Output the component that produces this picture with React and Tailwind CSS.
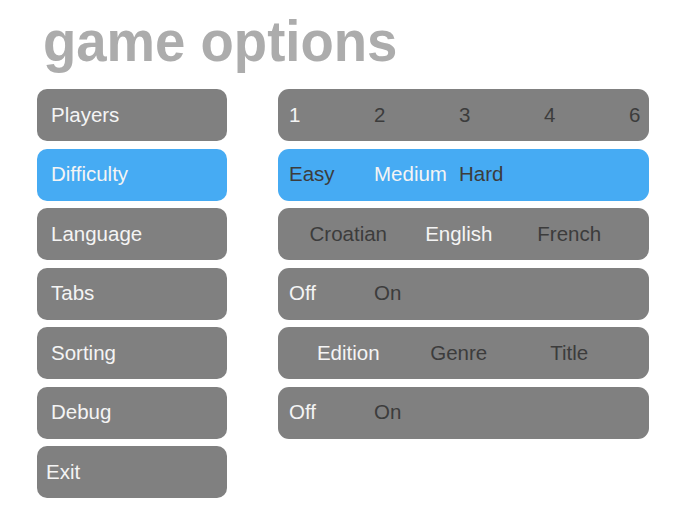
import React from "react";

const menu = ["Players", "Difficulty", "Language", "Tabs", "Sorting", "Debug", "Exit"];

const rows = [
  { type: "left", items: ["1", "2", "3", "4", "6"], selected: 0 },
  { type: "left", items: ["Easy", "Medium", "Hard"], selected: 1, active: true },
  { type: "center", items: ["Croatian", "English", "French"], selected: 1 },
  { type: "left", items: ["Off", "On"], selected: 0 },
  { type: "center", items: ["Edition", "Genre", "Title"], selected: 0 },
  { type: "left", items: ["Off", "On"], selected: 0 },
];

const OptionRow = ({ row }) => {
  const bg = row.active ? "bg-[#46abf3]" : "bg-[#808080]";
  return (
    <div className={`flex h-[52px] items-center rounded-[11px] ${bg} ${row.type === "left" ? "pl-[11px]" : "pl-[15px]"}`}>
      {row.items.map((item, i) => (
        <span
          key={i}
          className={`shrink-0 ${row.type === "left" ? "w-[85px]" : "w-[110.5px] text-center"} whitespace-nowrap ${
            i === row.selected ? "text-[#f4f4f4]" : "text-[#3c3c3c]"
          }`}
        >
          {item}
        </span>
      ))}
    </div>
  );
};

export default function App() {
  return (
    <div className="w-[680px] h-[510px] bg-white font-['Liberation_Sans',Arial,sans-serif] overflow-hidden">
      <h1 className="pl-[43px] pt-[12px] h-[71px] text-[58px] leading-none font-bold text-[#acacac]">
        <span className="inline-block origin-left scale-x-[0.94] whitespace-nowrap">game options</span>
      </h1>
      <div className="flex mt-[18px] pl-[37px] gap-[51px] text-[20.5px]">
        <div className="flex flex-col gap-[7.5px] w-[190px]">
          {menu.map((label, i) => (
            <div
              key={label}
              className={`flex h-[52px] items-center rounded-[10px] text-[#f4f4f4] ${
                label === "Exit" ? "pl-[9px]" : "pl-[14px]"
              } ${i === 1 ? "bg-[#46abf3]" : "bg-[#808080]"}`}
            >
              {label}
            </div>
          ))}
        </div>
        <div className="flex flex-col gap-[7.5px] w-[371px]">
          {rows.map((row, i) => (
            <OptionRow key={i} row={row} />
          ))}
        </div>
      </div>
    </div>
  );
}
